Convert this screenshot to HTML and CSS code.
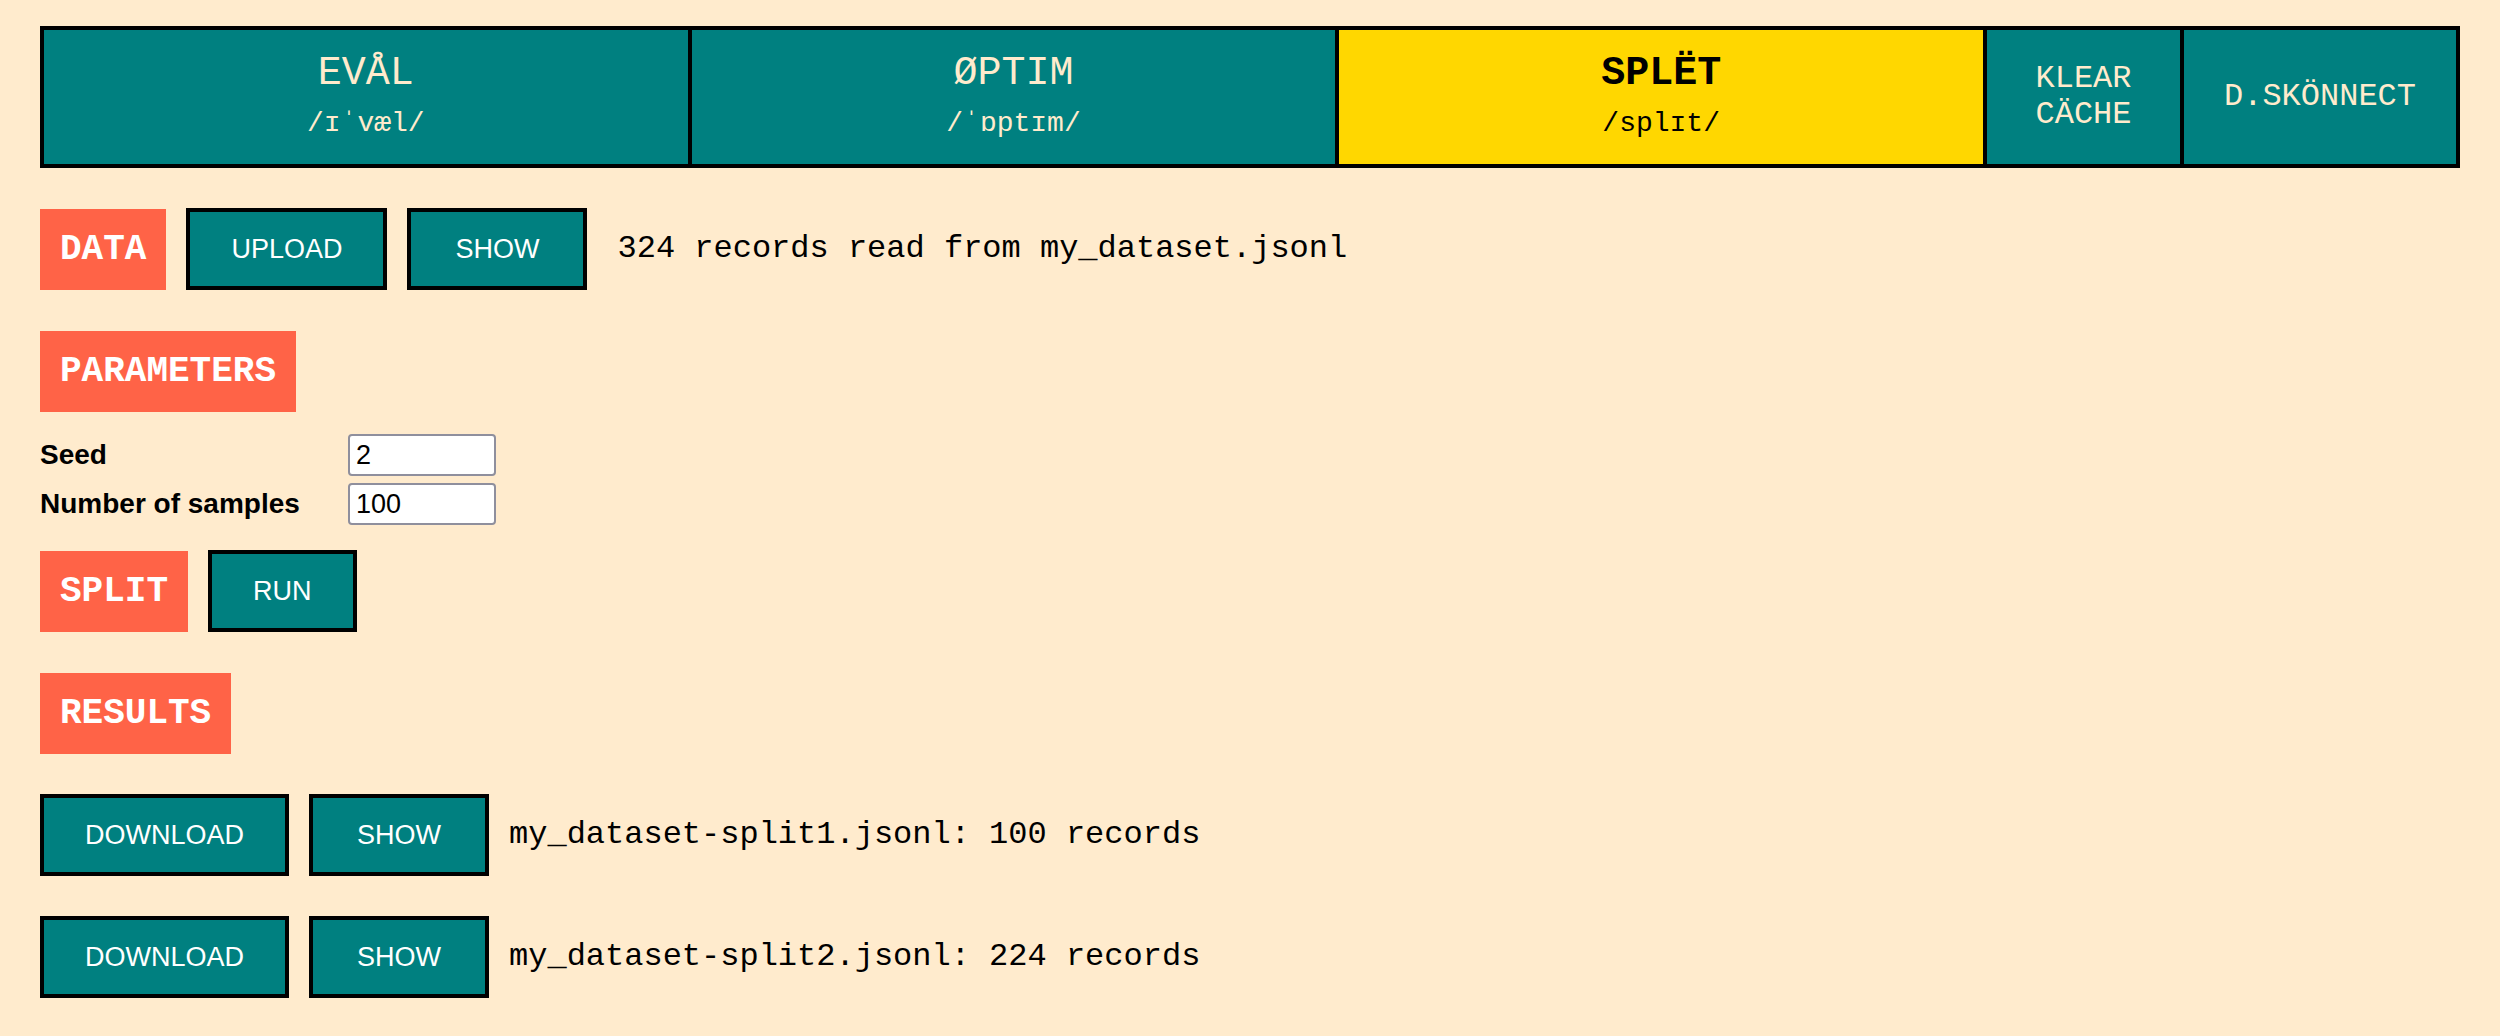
FILE: index.html
```html
<!DOCTYPE html>
<html lang="en">
<head>
<meta charset="utf-8">
<title>SPLËT</title>
<link rel="stylesheet" href="styles.css">
</head>
<body>
<nav class="nav">
  <div class="nav-cell"><span class="nav-title">EVÅL</span><span class="nav-sub">/ɪˈvæl/</span></div>
  <div class="nav-cell"><span class="nav-title">ØPTIM</span><span class="nav-sub">/ˈɒptɪm/</span></div>
  <div class="nav-cell active"><span class="nav-title">SPLËT</span><span class="nav-sub">/splɪt/</span></div>
  <div class="nav-cell small"><span class="nav-small">KLEAR CÄCHE</span></div>
  <div class="nav-cell small"><span class="nav-small">D.SKÖNNECT</span></div>
</nav>

<main class="main">
  <div class="row">
    <span class="tag">DATA</span>
    <button class="btn">UPLOAD</button>
    <button class="btn btn-show">SHOW</button>
    <span class="info info-wide">324 records read from my_dataset.jsonl</span>
  </div>

  <div class="row">
    <span class="tag">PARAMETERS</span>
  </div>

  <div class="params">
    <label class="param-label" for="seed">Seed</label>
    <input class="param-input" id="seed" type="text" value="2">
    <label class="param-label" for="samples">Number of samples</label>
    <input class="param-input" id="samples" type="text" value="100">
  </div>

  <div class="row row-split">
    <span class="tag">SPLIT</span>
    <button class="btn">RUN</button>
  </div>

  <div class="row">
    <span class="tag">RESULTS</span>
  </div>

  <div class="row">
    <button class="btn">DOWNLOAD</button>
    <button class="btn btn-show">SHOW</button>
    <span class="info">my_dataset-split1.jsonl: 100 records</span>
  </div>

  <div class="row">
    <button class="btn">DOWNLOAD</button>
    <button class="btn btn-show">SHOW</button>
    <span class="info">my_dataset-split2.jsonl: 224 records</span>
  </div>
</main>
</body>
</html>
```

FILE: styles.css
```css
html, body {
  margin: 0;
  padding: 0;
  background: #ffebcd;
}

body {
  padding: 26px 40px 0 40px;
  font-family: "Liberation Mono", "Courier New", monospace;
  color: #000;
}

.nav {
  display: grid;
  grid-template-columns: 1fr 1fr 1fr 193px 272px;
  gap: 4px;
  height: 142px;
  box-sizing: border-box;
  border: 4px solid #000;
  background: #000;
}

.nav-cell {
  background: #008080;
  color: #ffebcd;
  display: flex;
  flex-direction: column;
  align-items: center;
  justify-content: center;
  gap: 12px;
  text-align: center;
  padding-bottom: 4px;
  box-sizing: border-box;
}

.nav-cell.small {
  padding: 0 40px;
}

.nav-cell.active {
  background: #ffd700;
  color: #000;
}

.nav-title {
  font-size: 40px;
  line-height: 45px;
}

.nav-cell.active .nav-title {
  font-weight: bold;
}

.nav-sub {
  font-size: 28px;
  line-height: 32px;
}

.nav-small {
  font-size: 32px;
  line-height: 36.5px;
}

.main {
  display: flex;
  flex-direction: column;
  align-items: flex-start;
}

.row {
  display: flex;
  align-items: center;
  gap: 20px;
  margin-top: 40px;
  min-height: 82px;
}

.row-split {
  margin-top: 25px;
}

.tag {
  background: #ff6347;
  color: #fff;
  font-family: "Liberation Mono", "Courier New", monospace;
  font-weight: bold;
  font-size: 36px;
  line-height: 41px;
  padding: 20px;
}

.btn {
  background: #008080;
  color: #fff;
  border: 4px solid #000;
  border-radius: 0;
  font-family: "Liberation Sans", Arial, Helvetica, sans-serif;
  font-size: 27px;
  line-height: 32px;
  padding: 21px 41px;
  margin: 0;
  cursor: pointer;
}

.btn-show {
  padding-left: 44px;
  padding-right: 44px;
}

.info {
  font-family: "Liberation Mono", "Courier New", monospace;
  font-size: 32px;
  line-height: 36px;
  white-space: pre;
}

.info-wide {
  margin-left: 10px;
}

.params {
  display: grid;
  grid-template-columns: 308px 148px;
  row-gap: 7px;
  align-items: center;
  margin-top: 22px;
}

.param-label {
  font-family: "Liberation Sans", Arial, Helvetica, sans-serif;
  font-weight: bold;
  font-size: 28px;
}

.param-input {
  box-sizing: border-box;
  width: 148px;
  height: 42px;
  border: 2px solid #8f8f9d;
  border-radius: 4px;
  background: #fff;
  padding: 0 6px;
  font-family: "Liberation Sans", Arial, Helvetica, sans-serif;
  font-size: 27px;
  color: #000;
}
```
